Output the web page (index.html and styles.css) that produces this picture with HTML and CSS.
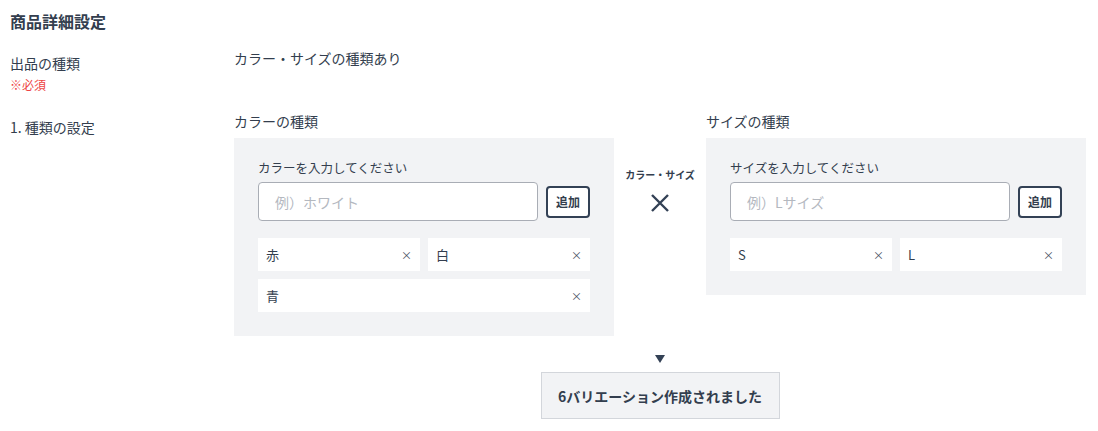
FILE: index.html
```html
<!DOCTYPE html>
<html lang="ja">
<head>
    <meta charset="UTF-8">
    <meta name="viewport" content="width=device-width, initial-scale=1.0">
    <title>商品詳細設定</title>
    <link rel="stylesheet" href="styles.css">
</head>
<body>
    <h2 class="section-title">商品詳細設定</h2>

    <div class="form-row">
        <div class="row-label">
            出品の種類
            <span class="required">※必須</span>
        </div>
        <div class="row-value">カラー・サイズの種類あり</div>
    </div>

    <div class="form-row variation-row">
        <div class="row-label">1. 種類の設定</div>
        <div class="variation-area">
            <div class="variation-col">
                <div class="col-title">カラーの種類</div>
                <div class="variation-box">
                    <div class="input-label">カラーを入力してください</div>
                    <div class="input-line">
                        <input type="text" placeholder="例）ホワイト">
                        <button class="add-btn">追加</button>
                    </div>
                    <div class="tag-list">
                        <div class="tag"><span>赤</span><span class="tag-remove">×</span></div>
                        <div class="tag"><span>白</span><span class="tag-remove">×</span></div>
                        <div class="tag wide"><span>青</span><span class="tag-remove">×</span></div>
                    </div>
                </div>
            </div>

            <div class="cross">
                <div class="cross-label">カラー・サイズ</div>
                <svg width="20" height="20" viewBox="0 0 20 20">
                    <path d="M2 2 L18 18 M18 2 L2 18" stroke="#334155" stroke-width="2.4" fill="none"/>
                </svg>
            </div>

            <div class="variation-col">
                <div class="col-title">サイズの種類</div>
                <div class="variation-box">
                    <div class="input-label">サイズを入力してください</div>
                    <div class="input-line">
                        <input type="text" placeholder="例）Lサイズ">
                        <button class="add-btn">追加</button>
                    </div>
                    <div class="tag-list">
                        <div class="tag"><span>S</span><span class="tag-remove">×</span></div>
                        <div class="tag"><span>L</span><span class="tag-remove">×</span></div>
                    </div>
                </div>
            </div>
        </div>
    </div>

    <div class="result">
        <div class="arrow-down"></div>
        <div class="result-box">6バリエーション作成されました</div>
    </div>
</body>
</html>
```

FILE: styles.css
```css
body {
    font-family: "Noto Sans CJK JP", "Noto Sans", sans-serif;
    color: #333e4e;
    margin: 0;
    padding: 10px;
    font-size: 14px;
    background: #fff;
}
.section-title {
    font-size: 16px;
    font-weight: bold;
    margin: 0;
    line-height: 22px;
}
.form-row {
    display: flex;
    margin-top: 15px;
}
.row-label {
    width: 224px;
    flex-shrink: 0;
    line-height: 22px;
    padding-top: 5px;
}
.required {
    display: block;
    color: #ee4444;
    font-size: 12px;
    line-height: 16px;
    margin-top: 3px;
}
.row-value {
    line-height: 22px;
}
.variation-row {
    margin-top: 17px;
}
.variation-row .row-label {
    padding-top: 6px;
}
.variation-area {
    display: flex;
    align-items: flex-start;
}
.variation-col {
    width: 380px;
}
.col-title {
    line-height: 22px;
    margin-bottom: 6px;
}
.variation-box {
    background: #f2f3f5;
    padding: 20px 24px 24px;
}
.input-label {
    font-size: 12.5px;
    line-height: 20px;
    margin-bottom: 4px;
}
.input-line {
    display: flex;
    align-items: center;
    gap: 8px;
}
input {
    width: 280px;
    height: 39px;
    box-sizing: border-box;
    border: 1px solid #a9adb5;
    border-radius: 4px;
    padding: 0 16px;
    font-family: inherit;
    font-size: 14px;
    color: #333e4e;
    background: #fff;
}
input::placeholder {
    color: #b4b8bf;
}
.add-btn {
    width: 44px;
    height: 32px;
    box-sizing: border-box;
    border: 2px solid #334155;
    border-radius: 4px;
    background: #fff;
    font-family: inherit;
    font-size: 12px;
    font-weight: bold;
    color: #333e4e;
    padding: 0;
}
.tag-list {
    display: grid;
    grid-template-columns: 162px 162px;
    gap: 8px;
    margin-top: 17px;
}
.tag {
    background: #fff;
    height: 33px;
    display: flex;
    align-items: center;
    justify-content: space-between;
    padding: 0 8px;
    font-size: 13px;
}
.tag.wide {
    grid-column: 1 / 3;
}
.tag-remove {
    font-size: 11px;
    color: #4a5363;
}
.cross {
    width: 92px;
    padding-top: 57px;
    display: flex;
    flex-direction: column;
    align-items: center;
}
.cross-label {
    font-size: 10px;
    font-weight: bold;
    line-height: 16px;
    margin-bottom: 10px;
}
.result {
    display: flex;
    flex-direction: column;
    align-items: center;
    margin-left: 234px;
    width: 832px;
    margin-top: 19px;
}
.arrow-down {
    width: 0;
    height: 0;
    border-left: 5px solid transparent;
    border-right: 5px solid transparent;
    border-top: 8px solid #334155;
    margin-bottom: 9px;
}
.result-box {
    width: 239px;
    height: 47px;
    box-sizing: border-box;
    border: 1px solid #d3d6db;
    background: #f2f3f5;
    display: flex;
    align-items: center;
    justify-content: center;
    font-weight: bold;
    font-size: 14px;
}
```
